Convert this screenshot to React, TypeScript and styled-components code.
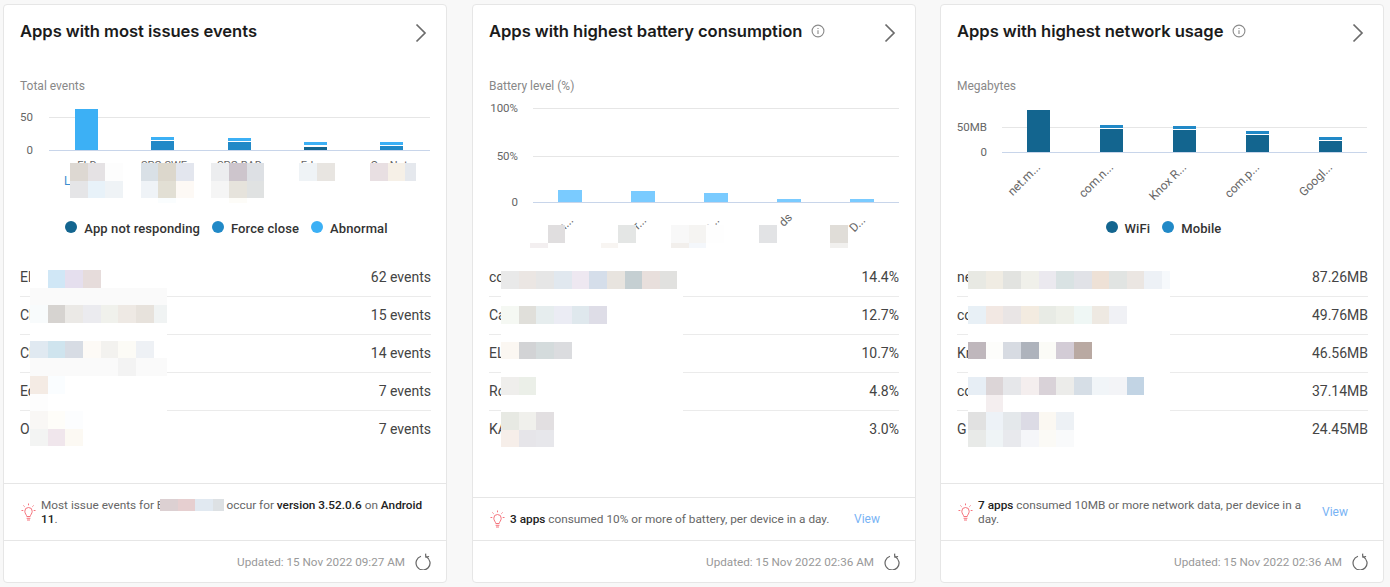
import React from "react";
import styled, { createGlobalStyle } from "styled-components";

const Global = createGlobalStyle`
  html, body { margin: 0; padding: 0; background: #f8f8f8; }
  body { font-family: Roboto, "Liberation Sans", sans-serif; }
`;

const Page = styled.div`
  display: flex;
  gap: 24px;
  width: 1390px;
  height: 587px;
  box-sizing: border-box;
  padding: 4px 6px 4px 3px;
  overflow: hidden;
`;

const Card = styled.section`
  position: relative;
  flex: 0 0 444px;
  display: flex;
  flex-direction: column;
  box-sizing: border-box;
  background: #fff;
  border: 1px solid #e6e6e6;
  border-radius: 4px;
  &:nth-child(2) { margin-left: 1px; }
`;

const Header = styled.header`
  display: flex;
  align-items: center;
  height: 55px;
  padding: 0 15px 0 16px;
  box-sizing: border-box;
`;

const Title = styled.h2`
  margin: 0 0 4px;
  font: 600 16.6px/22px Inter, "Noto Sans", sans-serif;
  letter-spacing: -0.05px;
  color: #1b1b1b;
`;

const InfoIcon = styled.svg`
  margin: 0 0 3px 9px;
  width: 14px;
  height: 14px;
`;

const Chevron = styled.svg`
  margin-left: auto;
  margin-right: 4px;
  width: 12px;
  height: 20px;
`;

const Axis = styled.div`
  margin: 19px 0 0 16px;
  height: 14px;
  font-size: 12px;
  line-height: 14px;
  color: #888;
`;

const ChartArea = styled.div`
  height: 166px;
  display: flex;
  flex-direction: column;
`;

const Plot = styled.svg<{ $h: number }>`
  display: block;
  flex: none;
  width: 442px;
  height: ${(p) => p.$h}px;
  font-family: Roboto, sans-serif;
`;

const Legend = styled.ul`
  list-style: none;
  display: flex;
  justify-content: center;
  gap: 12px;
  margin: 6px 0 0;
  padding: 0 0 0 3px;
`;

const LegendItem = styled.li`
  display: flex;
  align-items: center;
  gap: 7px;
  font-size: 13px;
  font-weight: 500;
  line-height: 16px;
  letter-spacing: 0.1px;
  color: #333;
`;

const Dot = styled.span<{ $c: string }>`
  width: 12px;
  height: 12px;
  margin-top: -4px;
  border-radius: 50%;
  background: ${(p) => p.$c};
`;

const List = styled.ul`
  list-style: none;
  flex: 1;
  margin: 0;
  padding: 0 15px 0 16px;
  section:nth-child(2) & { padding-right: 16px; }
`;

const Row = styled.li`
  display: flex;
  justify-content: space-between;
  align-items: center;
  height: 38px;
  box-sizing: border-box;
  padding-bottom: 2px;
  font-size: 14px;
  color: #444;
  border-bottom: 1px solid #ebebeb;
  &:last-child { border-bottom: 0; }
`;

const Insight = styled.div<{ $h: number }>`
  display: flex;
  align-items: center;
  height: ${(p) => p.$h}px;
  box-sizing: border-box;
  padding: 0 16px 0 17px;
  border-top: 1px solid #e6e6e6;
  font-size: 11.8px;
  line-height: 14px;
  color: #666;
`;

const Bulb = styled.svg`
  flex: none;
  width: 15px;
  height: 18px;
  margin-right: 5px;
`;

const InsightText = styled.p`
  flex: 1;
  margin: 0;
  b { font-weight: 500; color: #222; }
`;

const ViewLink = styled.a`
  margin: 0 19px 0 16px;
  color: #78b3f5;
  font-size: 12px;
`;

const Updated = styled.footer`
  display: flex;
  justify-content: flex-end;
  align-items: center;
  gap: 10px;
  height: 42px;
  box-sizing: border-box;
  padding-right: 15px;
  border-top: 1px solid #e6e6e6;
  font-size: 11.7px;
  color: #999;
`;

const Refresh = styled.svg`
  width: 16px;
  height: 17px;
`;

const Mosaic = styled.div<{ $x: number; $y: number; $cols: string; $rows: string }>`
  position: absolute;
  left: ${(p) => p.$x}px;
  top: ${(p) => p.$y}px;
  display: grid;
  grid-template-columns: ${(p) => p.$cols};
  grid-template-rows: ${(p) => p.$rows};
`;

const InlineMosaic = styled.span`
  display: inline-flex;
  vertical-align: -2px;
  height: 12px;
  margin: 0 3px 0 -4px;
`;

const InlineCell = styled.span<{ $w: number; $c: string }>`
  width: ${(p) => p.$w}px;
  background: ${(p) => p.$c};
`;

const Cell = styled.i<{ $c: string }>`
  background: ${(p) => p.$c};
`;

const DARK = "#13658f";
const MID = "#2189c7";
const LIGHT = "#3cb0f5";
const PALE = "#7acbff";
const W = "#fff";

type Patch = { xs: number[]; ys: number[]; cells: string[][] };

const tracks = (edges: number[]) =>
  edges.slice(1).map((e, i) => `${e - edges[i]}px`).join(" ");

function Redaction({ patch, ox }: { patch: Patch; ox: number }) {
  return (
    <Mosaic
      $x={patch.xs[0] - ox}
      $y={patch.ys[0] - 5}
      $cols={tracks(patch.xs)}
      $rows={tracks(patch.ys)}
    >
      {patch.cells.flatMap((r, i) =>
        patch.xs.slice(1).map((_, j) => <Cell key={`${i}-${j}`} $c={r[j] ?? W} />)
      )}
    </Mosaic>
  );
}

const InfoGlyph = () => (
  <InfoIcon viewBox="0 0 14 14" fill="none" stroke="#8a8a8a">
    <circle cx="7" cy="7" r="5.9" strokeWidth="1.1" />
    <path d="M7 6.2v3.8M7 4v1.1" strokeWidth="1.1" />
  </InfoIcon>
);

const ChevronGlyph = () => (
  <Chevron viewBox="0 0 12 20" fill="none" stroke="#6b6b6b" strokeWidth="1.7">
    <path d="M1.5 1.5 10 10l-8.5 8.5" />
  </Chevron>
);

const BulbGlyph = () => (
  <Bulb viewBox="0 0 15 18" fill="none" stroke="#f5737d" strokeWidth="1">
    <path d="M7.5 0.5v1.8M2.4 2.5l1.2 1.2M12.6 2.5l-1.2 1.2M0.5 7.5h1.8M12.7 7.5h1.8" />
    <path d="M5.8 13.5C5.6 11.8 3.8 10.6 3.8 8.2a3.7 3.7 0 0 1 7.4 0c0 2.4-1.8 3.6-2 5.3z" />
    <path d="M5.6 15.3h3.8M6 17h3" />
  </Bulb>
);

const RefreshGlyph = () => (
  <Refresh viewBox="0 0 16 17" fill="none" stroke="#666" strokeWidth="1.2">
    <path d="M6 3.3A7 7 0 1 0 11.3 3.8" />
    <path d="M10.6 0.6 10.8 4l3.3-.5" />
  </Refresh>
);

type Bar = { x: number; segs: [number, number, string][] };

type ChartDef = {
  ox: number;
  h: number;
  left: number;
  right: number;
  labelX: number;
  barW: number;
  grid: { y: number; label: string }[];
  base: { y: number; label: string };
  bars: Bar[];
  labels?: React.ReactNode;
};

function Chart({ c }: { c: ChartDef }) {
  return (
    <Plot $h={c.h} viewBox={`${c.ox} 93 442 ${c.h}`}>
      {c.grid.map((g) => (
        <g key={g.label}>
          <line x1={c.left} x2={c.right} y1={g.y + 0.5} y2={g.y + 0.5} stroke="#e6e6e6" />
          <text x={c.labelX} y={g.y + 4.4} textAnchor="end" fontSize="11.5" fill="#666">
            {g.label}
          </text>
        </g>
      ))}
      {c.bars.map((b) =>
        b.segs.map(([t, e, col]) => (
          <rect key={`${b.x}-${t}`} x={b.x - c.barW / 2} y={t} width={c.barW} height={e - t} fill={col} />
        ))
      )}
      <line x1={c.left} x2={c.right} y1={c.base.y + 0.5} y2={c.base.y + 0.5} stroke="#c8d5ea" />
      <text x={c.labelX} y={c.base.y + 4.4} textAnchor="end" fontSize="11.5" fill="#666">
        {c.base.label}
      </text>
      {c.labels}
    </Plot>
  );
}

const Tick = styled.text`
  font-size: 12px;
  fill: #666;
`;

const TopTick = styled.text`
  font-size: 11px;
  fill: #666;
`;

const slanted = (items: [number, number, string][]) =>
  items.map(([x, y, t]) => (
    <Tick key={t + x} x={x} y={y} textAnchor="end" transform={`rotate(-45 ${x} ${y})`}>
      {t}
    </Tick>
  ));

const issueChart: ChartDef = {
  ox: 4, h: 122, left: 49, right: 430, labelX: 33, barW: 23,
  grid: [{ y: 117, label: "50" }],
  base: { y: 150, label: "0" },
  bars: [
    { x: 86.5, segs: [[109, 150, LIGHT]] },
    { x: 162.5, segs: [[137, 140, LIGHT], [141, 150, MID]] },
    { x: 239.5, segs: [[138, 141, LIGHT], [142, 150, MID]] },
    { x: 315.5, segs: [[142, 145, LIGHT], [147, 150, DARK]] },
    { x: 391.5, segs: [[142, 145, LIGHT], [146, 150, MID]] },
  ],
  labels: (
    <>
      {([[87, "ELD"], [164, "SPG SWE"], [239.5, "SPG RAD"], [310, "Edg"], [389, "OneNot"]] as [number, string][]).map(
        ([x, t]) => (
          <TopTick key={t} x={x} y={168.5} textAnchor="middle">
            {t}
          </TopTick>
        )
      )}
      <text x="64" y="185" fontSize="12" fill="#3b8ed0">L</text>
    </>
  ),
};

const batteryChart: ChartDef = {
  ox: 473, h: 166, left: 533, right: 899, labelX: 518, barW: 24,
  grid: [{ y: 108, label: "100%" }, { y: 156, label: "50%" }],
  base: { y: 202, label: "0" },
  bars: [
    { x: 570, segs: [[190, 202, PALE]] },
    { x: 643, segs: [[191, 202, PALE]] },
    { x: 716, segs: [[193, 202, PALE]] },
    { x: 789, segs: [[199, 202, PALE]] },
    { x: 862, segs: [[199, 202, PALE]] },
  ],
  labels: slanted([
    [574, 221, "n..."],
    [647, 221, "r..."],
    [720, 221, "p..."],
    [793, 218, "ds"],
    [866, 221, "D..."],
  ]),
};

const networkChart: ChartDef = {
  ox: 941, h: 122, left: 1002, right: 1367, labelX: 987, barW: 23,
  grid: [{ y: 127, label: "50MB" }],
  base: { y: 152, label: "0" },
  bars: [
    { x: 1038.5, segs: [[110, 152, DARK]] },
    { x: 1111.5, segs: [[125, 128, MID], [129, 152, DARK]] },
    { x: 1184.5, segs: [[126, 129, MID], [130, 152, DARK]] },
    { x: 1257.5, segs: [[131, 134, MID], [135, 152, DARK]] },
    { x: 1330.5, segs: [[137, 140, MID], [141, 152, DARK]] },
  ],
  labels: slanted([
    [1041, 168, "net.m..."],
    [1114, 168, "com.n..."],
    [1187, 168, "Knox R..."],
    [1260, 168, "com.p..."],
    [1333, 168, "Googl..."],
  ]),
};

const issuePatches: Patch[] = [
  { xs: [70, 88, 105, 123], ys: [163, 181, 198], cells: [["#ddd8d2", "#e5e2e4", "#fdfdfd"], ["#e5e5e7", "#e8f2f9", "#eff3f6"]] },
  { xs: [141, 158, 176, 194], ys: [163, 181, 198, 203], cells: [["#d9e0e6", "#dcd7cc", "#e3e6ee"], ["#eff3f7", "#e2dfd4", "#fdf9f5"], [W, "#fafdfe", W]] },
  { xs: [211, 229, 247, 264], ys: [163, 181, 198, 203], cells: [["#ecedef", "#cdc5cc", "#dde0e4"], ["#f5f5f5", "#e6e3dc", "#e0e2e2"], [W, "#fdfcf8", W]] },
  { xs: [299, 317, 335], ys: [163, 181], cells: [["#eff3f6", "#e8e5e1"]] },
  { xs: [370, 388, 405, 416], ys: [163, 181], cells: [["#e8dfe2", "#f6f0e7", "#e5e8ed"]] },
  {
    xs: [30, 48, 65, 83, 101, 118, 136, 154, 167],
    ys: [270, 288, 305, 323, 341, 358, 376, 394, 411, 429, 446],
    cells: [
      [W, "#d0e7f6", "#e5dfee", "#e6dcdb"],
      Array(8).fill("#fafafa"),
      ["#f8fbfc", "#d6d3d0", "#ebe9e6", "#ebebef", "#f0f1ec", "#eee9e4", "#e7e2dc", "#f0f3f3"],
      [],
      ["#e0e9f1", "#cfe4ee", "#d7dce4", "#fdfaf6", "#f3f2ef", "#fcfbf6", "#eef1f5", W],
      ["#fafafa", "#fafafa", "#fafafa", "#fafafa", "#fafafa", "#f3f3f3", "#fafafa", "#fafafa"],
      ["#f4ebe4", "#fafdff"],
      ["#fdfdfd"],
      ["#f9f7f5", "#fefdf9", "#fcfdfe"],
      ["#f3f4f3", "#f0e6ec", "#fcf9f3"],
    ],
  },
];

const batteryPatches: Patch[] = [
  { xs: [530, 548, 565], ys: [225, 243, 248], cells: [[W, "#e0dedf"], ["#f3eff0", W]] },
  { xs: [601, 618, 636], ys: [225, 243, 248], cells: [[W, "#e4e6e5"], ["#f8f5f2", W]] },
  { xs: [671, 689, 706, 724], ys: [225, 243, 248], cells: [["#f8f8f8", "#f5f4f2", "#fefefe"], ["#f2efec", "#f4f7fb", W]] },
  { xs: [759, 777], ys: [225, 243], cells: [["#e2e3e5"]] },
  { xs: [830, 848], ys: [225, 243, 248], cells: [["#e0ddd8"], ["#f1f0ee"]] },
  {
    xs: [501, 519, 536, 554, 572, 589, 607, 625, 642, 660, 677, 683],
    ys: [271, 289, 306, 324, 342, 359, 377, 395, 412, 430, 447],
    cells: [
      ["#e9e9e9", "#ebe6e3", "#e6e6e6", "#e1e8ef", "#eee8f1", "#d5deea", "#e8e4df", "#c5cfd2", "#e8dfdc", "#e1e1df"],
      [],
      ["#f5f8f3", "#e0dfda", "#e6edee", "#ebecf4", "#dfe8ed", "#dedde7"],
      [],
      ["#fbf7f2", "#d2d3d5", "#d4dbdc", "#dbdcdf"],
      [],
      ["#efeeec", "#ebefe8"],
      [],
      ["#e7e9e3", "#f0f0ec", "#e2dfe1"],
      ["#f6eee9", "#e6e5e9", "#e7e7eb"],
    ],
  },
];

const networkPatches: Patch[] = [
  {
    xs: [968, 986, 1003, 1021, 1039, 1056, 1074, 1092, 1109, 1127, 1144, 1162, 1170],
    ys: [271, 289, 306, 324, 342, 359, 377, 395, 412, 430, 447],
    cells: [
      ["#e8e9e3", "#f0ece3", "#e2e3e0", "#f0f0ea", "#ebe9ef", "#d9e2e3", "#e1e2e7", "#eee1d6", "#e1e4e2", "#ebe6e2", "#edf1f6", "#f6f9fc"],
      [],
      ["#e8f0f6", "#f2e8e3", "#e9e5e5", "#f3ebe0", "#e8ebe5", "#eef0e9", "#eff7f5", "#eee9e2", "#f0f1f5"],
      [],
      ["#bfb7bc", "#fdfdfb", "#d7dbe2", "#aeb3bc", "#fbfbf7", "#d3ccd6", "#b9a9a2"],
      [],
      ["#e7eef5", "#dcd5d7", "#e6e7ea", "#f4eeee", "#d9d2d8", "#ececea", "#d6dee6", "#f1f5f8", "#f3f4f7", "#c2d4e4"],
      [W, "#f4eeef"],
      ["#e1e1e1", "#edf2f7", "#e4e8eb", "#dcdbe5", "#fbf8f2", "#edf1f5"],
      ["#e8eae8", "#eff4f6", "#e8e9ed", "#f5f6f9", "#fbfaf6", "#f9fafb"],
    ],
  },
];

type Panel = {
  title: string;
  info?: boolean;
  axis: string;
  chart: ChartDef;
  legend?: [string, string][];
  rows: [string, string][];
  patches: Patch[];
  insightH: number;
  insight: React.ReactNode;
  view?: boolean;
  updated: string;
};

const panels: Panel[] = [
  {
    title: "Apps with most issues events",
    axis: "Total events",
    chart: issueChart,
    legend: [["App not responding", DARK], ["Force close", MID], ["Abnormal", LIGHT]],
    rows: [["El", "62 events"], ["Cl", "15 events"], ["Cl", "14 events"], ["Ed", "7 events"], ["O", "7 events"]],
    patches: issuePatches,
    insightH: 57,
    insight: (
      <>
        Most issue events for E
        <InlineMosaic>
          <InlineCell $w={18} $c="#dcd0d2" />
          <InlineCell $w={17} $c="#e6cfd0" />
          <InlineCell $w={18} $c="#e1e9f1" />
          <InlineCell $w={11} $c="#dde1e4" />
        </InlineMosaic>
        occur for <b>version 3.52.0.6</b> on <b>Android 11</b>.
      </>
    ),
    updated: "Updated: 15 Nov 2022 09:27 AM",
  },
  {
    title: "Apps with highest battery consumption",
    info: true,
    axis: "Battery level (%)",
    chart: batteryChart,
    rows: [["co", "14.4%"], ["Ca", "12.7%"], ["EL", "10.7%"], ["Ro", "4.8%"], ["KA", "3.0%"]],
    patches: batteryPatches,
    insightH: 43,
    insight: (
      <>
        <b>3 apps</b> consumed 10% or more of battery, per device in a day.
      </>
    ),
    view: true,
    updated: "Updated: 15 Nov 2022 02:36 AM",
  },
  {
    title: "Apps with highest network usage",
    info: true,
    axis: "Megabytes",
    chart: networkChart,
    legend: [["WiFi", DARK], ["Mobile", MID]],
    rows: [["ne", "87.26MB"], ["co", "49.76MB"], ["Kr", "46.56MB"], ["co", "37.14MB"], ["G", "24.45MB"]],
    patches: networkPatches,
    insightH: 57,
    insight: (
      <>
        <b>7 apps</b> consumed 10MB or more network data, per device in a day.
      </>
    ),
    view: true,
    updated: "Updated: 15 Nov 2022 02:36 AM",
  },
];

export default function App() {
  return (
    <>
      <Global />
      <Page>
        {panels.map((p) => (
          <Card key={p.title}>
            <Header>
              <Title>{p.title}</Title>
              {p.info && <InfoGlyph />}
              <ChevronGlyph />
            </Header>
            <Axis>{p.axis}</Axis>
            <ChartArea>
              <Chart c={p.chart} />
              {p.legend && (
                <Legend>
                  {p.legend.map(([t, c]) => (
                    <LegendItem key={t}>
                      <Dot $c={c} />
                      {t}
                    </LegendItem>
                  ))}
                </Legend>
              )}
            </ChartArea>
            <List>
              {p.rows.map(([n, v], i) => (
                <Row key={i}>
                  <span>{n}</span>
                  <span>{v}</span>
                </Row>
              ))}
            </List>
            <Insight $h={p.insightH}>
              <BulbGlyph />
              <InsightText>{p.insight}</InsightText>
              {p.view && <ViewLink>View</ViewLink>}
            </Insight>
            <Updated>
              {p.updated}
              <RefreshGlyph />
            </Updated>
            {p.patches.map((m, i) => (
              <Redaction key={i} patch={m} ox={p.chart.ox} />
            ))}
          </Card>
        ))}
      </Page>
    </>
  );
}
